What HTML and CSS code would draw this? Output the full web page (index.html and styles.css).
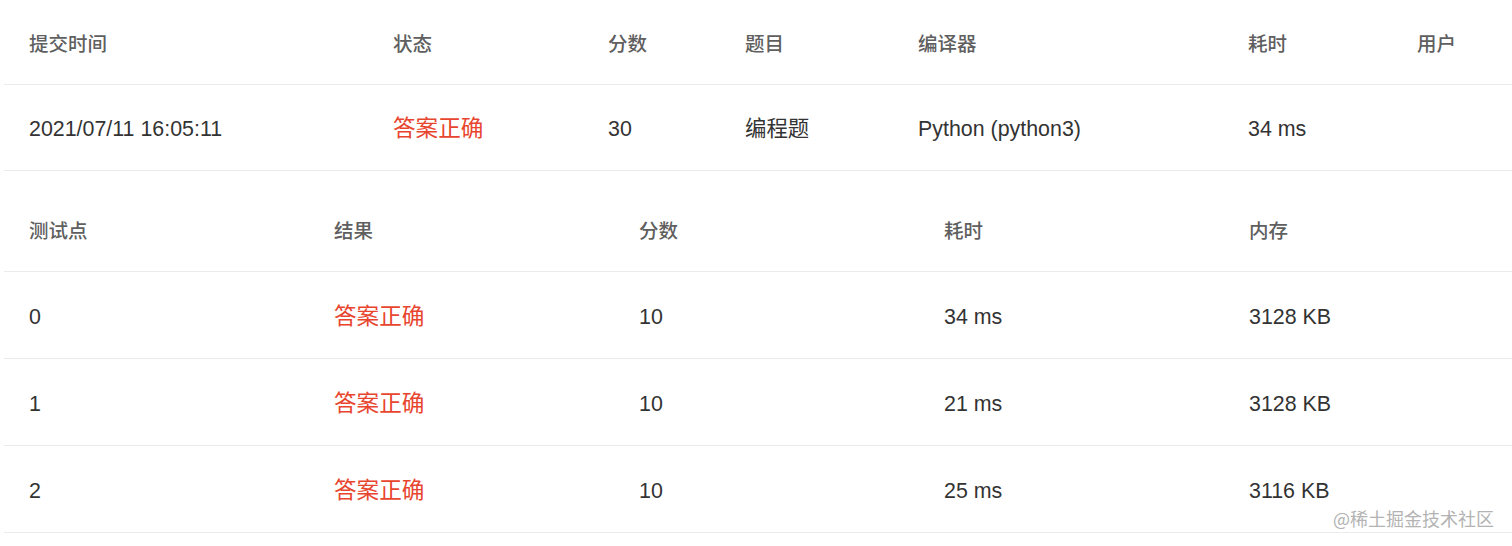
FILE: index.html
```html
<!DOCTYPE html>
<html lang="zh-CN">
<head>
<meta charset="utf-8">
<title>提交详情</title>
<link rel="stylesheet" href="styles.css">
</head>
<body>
<div class="page">
  <div class="table t1">
    <div class="row head">
      <div class="cell">提交时间</div>
      <div class="cell">状态</div>
      <div class="cell">分数</div>
      <div class="cell">题目</div>
      <div class="cell">编译器</div>
      <div class="cell">耗时</div>
      <div class="cell">用户</div>
    </div>
    <div class="row body">
      <div class="cell">2021/07/11 16:05:11</div>
      <div class="cell ok">答案正确</div>
      <div class="cell">30</div>
      <div class="cell">编程题</div>
      <div class="cell">Python (python3)</div>
      <div class="cell">34 ms</div>
      <div class="cell"></div>
    </div>
  </div>
  <div class="table t2">
    <div class="row head">
      <div class="cell">测试点</div>
      <div class="cell">结果</div>
      <div class="cell">分数</div>
      <div class="cell">耗时</div>
      <div class="cell">内存</div>
    </div>
    <div class="row body">
      <div class="cell">0</div>
      <div class="cell ok">答案正确</div>
      <div class="cell">10</div>
      <div class="cell">34 ms</div>
      <div class="cell">3128 KB</div>
    </div>
    <div class="row body">
      <div class="cell">1</div>
      <div class="cell ok">答案正确</div>
      <div class="cell">10</div>
      <div class="cell">21 ms</div>
      <div class="cell">3128 KB</div>
    </div>
    <div class="row body">
      <div class="cell">2</div>
      <div class="cell ok">答案正确</div>
      <div class="cell">10</div>
      <div class="cell">25 ms</div>
      <div class="cell">3116 KB</div>
    </div>
  </div>
  <div class="watermark">@稀土掘金技术社区</div>
</div>
</body>
</html>
```

FILE: styles.css
```css
html, body {
  margin: 0;
  padding: 0;
  background: #ffffff;
}

body {
  font-family: "Liberation Sans", "Noto Sans CJK SC", sans-serif;
  color: #333333;
  overflow: hidden;
}

.page {
  position: relative;
  width: 1512px;
  height: 546px;
}

.table {
  margin-left: 4px;
}

.row {
  display: grid;
  align-items: center;
  box-sizing: border-box;
  border-bottom: 1px solid #ebebeb;
}

.t1 .row {
  grid-template-columns: 364px 215px 137px 173px 330px 169px 1fr;
}

.t2 .row {
  grid-template-columns: 305px 305px 305px 305px 1fr;
}

.cell {
  padding-left: 25px;
  white-space: nowrap;
}

.head .cell {
  font-size: 19.5px;
  font-weight: 500;
  color: #5f5f5f;
  line-height: 24px;
}

.body .cell {
  font-size: 21.4px;
  color: #333333;
  line-height: 26px;
}

.body .cell.ok {
  color: #e8452f;
  font-size: 22.6px;
}

.t1 .head {
  height: 85px;
  padding-top: 4px;
}

.t1 .body {
  height: 86px;
  padding-top: 3px;
}

.t2 .head {
  height: 101px;
  padding-top: 20px;
}

.t2 .body {
  height: 87px;
  padding-top: 3px;
}

.watermark {
  position: absolute;
  right: 18px;
  top: 506px;
  font-size: 18px;
  line-height: 24px;
  color: #b3b3b3;
  font-family: "Noto Sans CJK SC", sans-serif;
}
```
